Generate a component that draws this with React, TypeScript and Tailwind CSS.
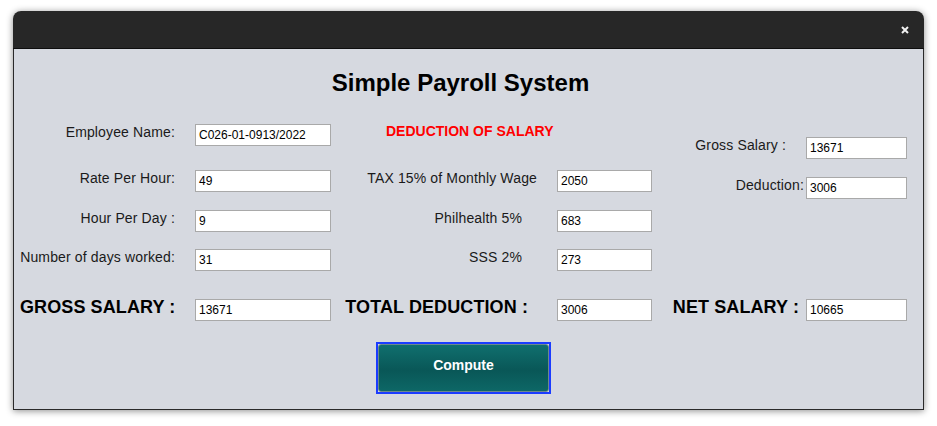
export default function App() {
  const field = "h-[22px] bg-white border border-[#a9a9a9] px-[3px] text-[12px] leading-[20px] tracking-normal text-black";

  return (
    <div className="w-[937px] h-[426px] bg-white pt-[11px] pl-[13px] font-['Liberation_Sans',Arial,sans-serif] text-[#1a1a1a] whitespace-nowrap">
      <div className="w-[911px] rounded-t-[8px] overflow-hidden shadow-[0_1px_7px_rgba(0,0,0,0.45)]">
        {/* Title bar */}
        <div className="h-[38px] bg-[#272727] border-b border-[#0e0e0e] flex items-center justify-end pr-[15px]">
          <svg width="8" height="8" viewBox="0 0 8 8">
            <path d="M1 1L7 7M7 1L1 7" stroke="#f2f2f2" strokeWidth="2" />
          </svg>
        </div>

        {/* Content */}
        <div className="h-[361px] bg-[#d6d9e0] border-x border-b border-[#2a2a2a]">
          <div className="pt-[20px] pr-[16px] text-center text-[24px] leading-[28px] font-bold text-black">
            Simple Payroll System
          </div>

          <div className="mt-[26px] flex items-start tracking-[0.14px]">
            {/* Employee info */}
            <div className="w-[317px] pt-[1px] text-[14px] leading-[16px]">
              <div className="flex items-start">
                <span className="w-[161px] text-right">Employee Name:</span>
                <div className={`${field} ml-[20px] w-[136px]`}>C026-01-0913/2022</div>
              </div>
              <div className="flex items-start mt-[24px]">
                <span className="w-[161px] text-right">Rate Per Hour:</span>
                <div className={`${field} ml-[20px] w-[136px]`}>49</div>
              </div>
              <div className="flex items-start mt-[18px]">
                <span className="w-[161px] text-right">Hour Per Day :</span>
                <div className={`${field} ml-[20px] w-[136px]`}>9</div>
              </div>
              <div className="flex items-start mt-[17px]">
                <span className="w-[161px] text-right">Number of days worked:</span>
                <div className={`${field} ml-[20px] w-[136px]`}>31</div>
              </div>
            </div>

            {/* Deductions */}
            <div className="ml-[14px] w-[307px] text-[14px] leading-[16px]">
              <div className="pl-[41px] font-bold tracking-normal text-[#ff0000]">DEDUCTION OF SALARY</div>
              <div className="flex items-start justify-end mt-[31px]">
                <span>TAX 15% of Monthly Wage</span>
                <div className={`${field} ml-[20px] w-[95px]`}>2050</div>
              </div>
              <div className="flex items-start justify-end mt-[18px]">
                <span>Philhealth 5%</span>
                <div className={`${field} ml-[35px] w-[95px]`}>683</div>
              </div>
              <div className="flex items-start justify-end mt-[17px]">
                <span>SSS 2%</span>
                <div className={`${field} ml-[35px] w-[95px]`}>273</div>
              </div>
            </div>

            {/* Summary */}
            <div className="ml-[21px] w-[234px] pt-[14px] text-[14px] leading-[16px]">
              <div className="flex items-start justify-end">
                <span>Gross Salary :</span>
                <div className={`${field} ml-[20px] w-[101px]`}>13671</div>
              </div>
              <div className="flex items-start justify-end mt-[18px]">
                <span>Deduction:</span>
                <div className={`${field} ml-[2px] w-[101px]`}>3006</div>
              </div>
            </div>
          </div>

          {/* Totals */}
          <div className="mt-[28px] flex items-start text-[18px] leading-[16px] font-bold tracking-[0.1px] text-black">
            <div className="w-[317px] flex items-start">
              <span className="w-[161px] shrink-0 pl-[6px]">GROSS SALARY :</span>
              <div className={`${field} ml-[20px] w-[136px] shrink-0 font-normal`}>13671</div>
            </div>
            <div className="ml-[14px] w-[307px] flex items-start justify-end">
              <span>TOTAL DEDUCTION :</span>
              <div className={`${field} ml-[29px] w-[95px] shrink-0 font-normal`}>3006</div>
            </div>
            <div className="ml-[21px] w-[234px] flex items-start justify-end">
              <span>NET SALARY :</span>
              <div className={`${field} ml-[7px] w-[101px] shrink-0 font-normal`}>10665</div>
            </div>
          </div>

          <button className="mt-[21px] ml-[362px] w-[175px] h-[52px] border-2 border-[#1b3cff] block">
            <div className="h-full w-full rounded-[3px] border border-[#6d8a8a] bg-[linear-gradient(to_bottom,#106f6e,#095757_55%,#0d6766)] pt-[12px] text-center text-[14px] leading-[16px] font-bold text-white">
              Compute
            </div>
          </button>
        </div>
      </div>
    </div>
  );
}
